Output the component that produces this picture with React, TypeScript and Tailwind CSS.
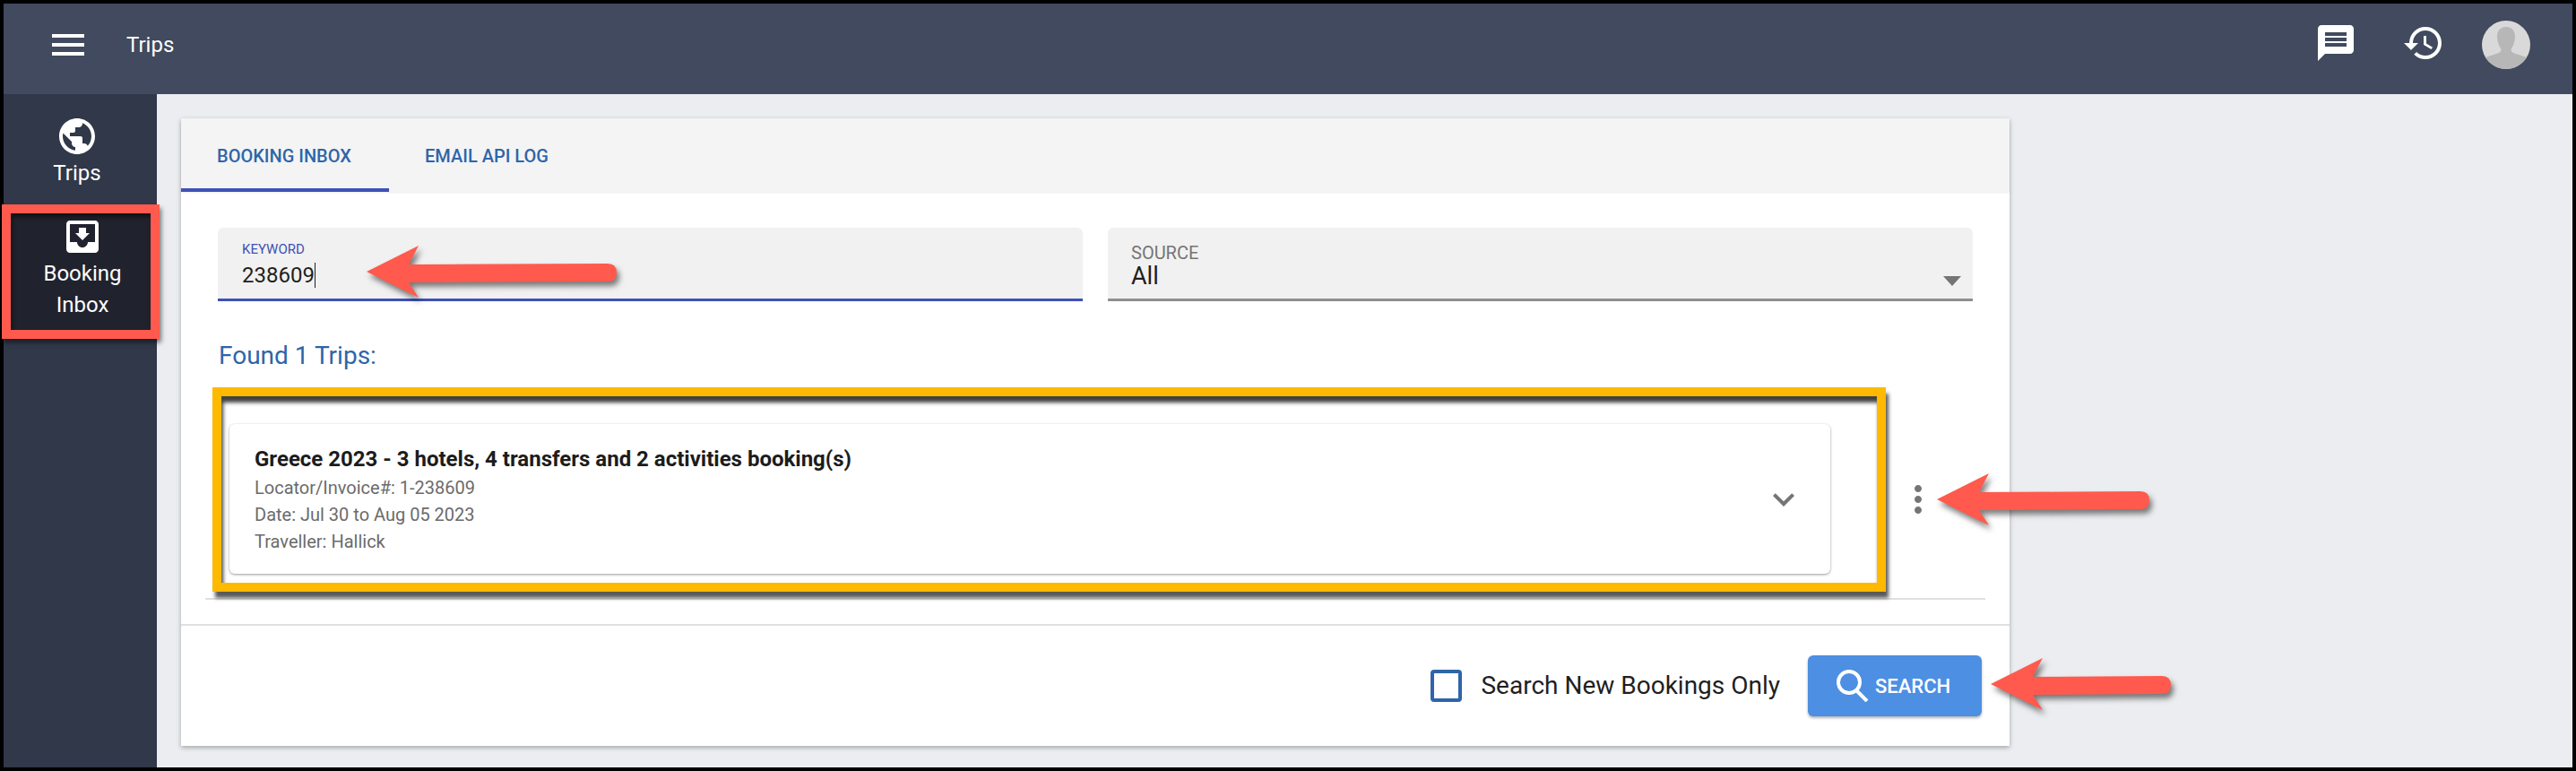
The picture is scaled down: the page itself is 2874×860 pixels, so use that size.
import React from "react";
import { MdMenu, MdPublic, MdMoveToInbox, MdMessage, MdHistory, MdExpandMore, MdMoreVert } from "react-icons/md";

function Arrow({ className, w }: { className: string; w: number }) {
  return (
    <svg
      className={"absolute drop-shadow-[3px_5px_3px_rgba(0,0,0,0.5)] " + className}
      width={w}
      height={60}
      viewBox={`0 0 ${w} 60`}
    >
      <path
        d={`M0 29 L58 0 L47 21 L${w - 10} 20 Q${w} 20 ${w} 30 Q${w} 40 ${w - 10} 40 L47 41 L58 58 Z`}
        fill="#ff5a4d"
      />
    </svg>
  );
}

export default function App() {
  return (
    <div className="relative w-[2874px] h-[860px] bg-black p-1 overflow-hidden font-['Roboto',sans-serif]">
      <div className="w-full h-full flex flex-col bg-[#ecedf0]">
        <header className="h-[101px] shrink-0 bg-[#414a5e] pb-[9px] flex items-center text-white">
          <MdMenu size={48} className="ml-[48px]" />
          <span className="ml-[41px] text-[24px] leading-none">Trips</span>
          <div className="ml-auto flex items-center">
            <MdMessage size={48} className="mr-[50px] -mt-[4px]" />
            <MdHistory size={48} className="mr-[41px] -mt-[4px]" />
            <svg width="54" height="54" viewBox="0 0 54 54" className="mr-[47px]">
              <circle cx="27" cy="27" r="27" fill="#d9d9d9" />
              <path
                d="M27 7c-7 0-10 5-10 11 0 5 2 10 4 13 1 2 0 4-2 5L4 41a27 27 0 0 0 46 0l-15-5c-2-1-3-3-2-5 2-3 4-8 4-13 0-6-3-11-10-11z"
                fill="#b7b7b7"
              />
            </svg>
          </div>
        </header>
        <div className="flex flex-1 min-h-0">
          <aside className="w-[171px] shrink-0 bg-[#30384a] text-white text-[24px] leading-[35px] text-center">
            <div className="pt-[23px] pr-[7px] flex flex-col items-center">
              <MdPublic size={48} />
              <span>Trips</span>
            </div>
            <div className="mt-[27px] pt-[3px] h-[133px] pl-[5px] bg-[#20232e] flex flex-col items-center">
              <MdMoveToInbox size={48} className="-mt-px" />
              <span>
                Booking
                <br />
                Inbox
              </span>
            </div>
          </aside>
          <main className="flex-1 pl-[27px] pt-[27px]">
            <section className="w-[2040px] h-[700px] bg-white shadow-[0_2px_5px_rgba(0,0,0,0.3)] flex flex-col">
              <nav className="h-[82px] shrink-0 bg-[#f4f4f5] flex text-[20px] font-medium text-[#2f65a8] shadow-[0_1px_2px_rgba(0,0,0,0.08)]">
                <div className="w-[232px] pl-[40px] pt-[27px] border-b-4 border-[#3f51b5]">BOOKING INBOX</div>
                <div className="pl-[40px] pt-[27px]">EMAIL API LOG</div>
              </nav>
              <div className="pt-[40px] px-[41px] flex gap-[28px]">
                <div className="w-[965px] h-[82px] bg-[#f1f1f1] rounded-t-[6px] border-b-[3px] border-[#3f51b5] pl-[27px]">
                  <div className="pt-[15px] text-[15px] leading-[18px] text-[#3f51b5]">KEYWORD</div>
                  <div className="mt-[4px] flex items-center text-[24px] leading-[32px] text-[#1f1f1f]">
                    238609
                    <span className="w-px h-[28px] bg-[#1f1f1f]" />
                  </div>
                </div>
                <div className="relative w-[965px] h-[82px] bg-[#f1f1f1] rounded-t-[6px] border-b-[3px] border-[#8f8f8f] pl-[26px]">
                  <div className="pt-[18px] text-[20px] leading-[20px] text-[#757575]">SOURCE</div>
                  <div className="mt-px text-[27px] leading-[30px] text-[#1f1f1f]">All</div>
                  <div className="absolute right-[13px] top-[54px] w-0 h-0 border-x-[10px] border-x-transparent border-t-[11px] border-t-[#757575]" />
                </div>
              </div>
              <div className="mt-[41px] pl-[42px] text-[28px] leading-[40px] text-[#2f65a8]">Found 1 Trips:</div>
              <div className="mt-[56px] ml-[54px] flex items-center">
                <div className="w-[1786px] h-[167px] bg-white rounded-[6px] shadow-[0_1px_3px_rgba(0,0,0,0.4)] pl-[28px] pr-[28px] pt-[23px] flex items-center">
                  <div className="flex-1 self-start">
                    <div className="text-[24px] leading-[33px] font-bold text-[#1c1c1c]">
                      Greece 2023 - 3 hotels, 4 transfers and 2 activities booking(s)
                    </div>
                    <div className="text-[20px] leading-[30px] text-[#6b6b6b]">
                      <div>Locator/Invoice#: 1-238609</div>
                      <div>Date: Jul 30 to Aug 05 2023</div>
                      <div>Traveller: Hallick</div>
                    </div>
                  </div>
                  <MdExpandMore size={48} className="text-[#757575] -mt-[23px]" />
                </div>
                <MdMoreVert size={48} className="ml-[74px] text-[#757575]" />
              </div>
              <div className="mt-[27px] ml-[27px] w-[1986px] h-[2px] bg-[#e0e0e0]" />
              <div className="mt-[27px] flex-1 border-t-2 border-[#e0e0e0] flex items-center justify-end pr-[31px]">
                <div className="w-[35px] h-[36px] rounded-[4px] border-[4px] border-[#2f65a8] mr-[21px]" />
                <span className="text-[28px] text-[#1f1f1f] mr-[31px]">Search New Bookings Only</span>
                <button className="w-[194px] h-[68px] bg-[#4d8fe2] rounded-[6px] shadow-[0_2px_3px_rgba(0,0,0,0.3)] text-white text-[22px] font-medium flex items-center pl-[32px]">
                  <svg width="36" height="36" viewBox="0 0 36 36" className="mr-[7px]" fill="none" stroke="white" strokeWidth="4">
                    <circle cx="14" cy="14" r="12" />
                    <path d="M23 24l11 11" />
                  </svg>
                  SEARCH
                </button>
              </div>
            </section>
          </main>
        </div>
      </div>

      {/* annotations over the page */}
      <div className="absolute left-[2px] top-[228px] w-[176px] h-[150px] border-[10px] border-[#ff5a4d] shadow-[2px_4px_5px_rgba(0,0,0,0.5),inset_2px_4px_5px_rgba(0,0,0,0.5)]" />
      <div className="absolute left-[237px] top-[432px] w-[1867px] h-[228px] border-[10px] border-[#ffb900] shadow-[3px_7px_4px_rgba(0,0,0,0.65),inset_2px_7px_4px_rgba(0,0,0,0.75)]" />
      <Arrow className="left-[409px] top-[274px]" w={279} />
      <Arrow className="left-[2161px] top-[528px]" w={237} />
      <Arrow className="left-[2221px] top-[734px]" w={201} />
    </div>
  );
}
